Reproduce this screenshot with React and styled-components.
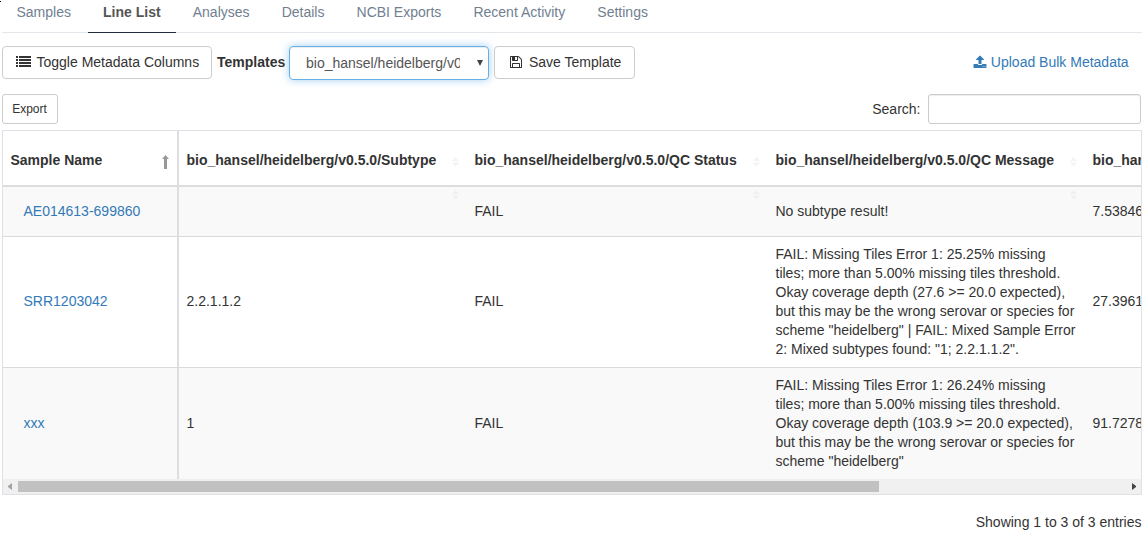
import React from "react";
import styled, { createGlobalStyle, css } from "styled-components";

const GlobalStyle = createGlobalStyle`
  *, *::before, *::after { box-sizing: border-box; }
  html, body { margin: 0; height: 536px; overflow: hidden; }
  body {
    background: #fff;
    color: #333;
    font-family: "Liberation Sans", Arial, Helvetica, sans-serif;
    font-size: 14px;
    line-height: 20px;
  }
`;

const Page = styled.main`
  width: 1142px;
  height: 536px;
  padding-left: 2px;
`;

const Speck = styled.i`
  position: absolute;
  left: 0;
  top: 1px;
  width: 1px;
  height: 1px;
  background: #000;
`;

const Tabs = styled.nav`
  display: flex;
  gap: 2.1px;
  height: 33px;
  box-shadow: inset 0 -1px 0 #e3e6ea;
`;

const Tab = styled.a`
  padding: 2px 15px 0;
  height: 33px;
  color: #708090;
  &:first-child {
    padding-left: 14.5px;
  }
  ${(p) =>
    p.$active &&
    css`
      color: #555;
      font-weight: bold;
      border-bottom: 1px solid #1f2d3d;
    `}
`;

const Toolbar = styled.div`
  display: flex;
  align-items: flex-start;
  height: 34px;
  margin-top: 13px;
`;

const Button = styled.button`
  display: flex;
  align-items: center;
  justify-content: ${(p) => (p.$small ? "center" : "flex-start")};
  width: ${(p) => p.$width}px;
  height: ${(p) => (p.$small ? 30 : 33)}px;
  padding: ${(p) => (p.$small ? "0 1px 0 0" : `0 0 1px ${p.$inset || 13}px`)};
  border: 1px solid #ccc;
  border-radius: ${(p) => (p.$small ? 3 : 4)}px;
  background: #fff;
  color: #333;
  font: inherit;
  font-size: ${(p) => (p.$small ? 12 : 14)}px;
  white-space: nowrap;
`;

const Icon = styled.svg`
  flex: none;
  width: ${(p) => p.$w || 14}px;
  height: 14px;
  margin-right: ${(p) => p.$gap}px;
  fill: currentColor;
`;

const Label = styled.label`
  margin: 6px 4px 0 5px;
  width: 68px;
  font-weight: bold;
  white-space: nowrap;
`;

const Select = styled.div`
  display: flex;
  align-items: center;
  width: 200px;
  height: 34px;
  margin-right: 5px;
  padding-left: 16px;
  border: 1px solid #66afe9;
  border-radius: 4px;
  color: #555;
  box-shadow: inset 0 1px 1px rgba(0, 0, 0, 0.075), 0 0 8px rgba(102, 175, 233, 0.6);
`;

const SelectValue = styled.span`
  width: 154px;
  overflow: hidden;
  white-space: nowrap;
`;

const Caret = styled.i`
  margin-left: 17px;
  border: solid transparent;
  border-width: 6px 3px 0;
  border-top-color: #444;
`;

const UploadLink = styled.a`
  display: flex;
  align-items: center;
  margin: 6px 13.4px 0 auto;
  color: #337ab7;
`;

const Controls = styled.div`
  display: flex;
  justify-content: space-between;
  height: 30px;
  margin: 14px 1px 6px 0;
`;

const Search = styled.label`
  display: flex;
  align-items: center;
  gap: 7.5px;
  padding-bottom: 1px;
  height: 30px;
`;

const SearchInput = styled.input`
  width: 213px;
  height: 30px;
  margin-bottom: -1px;
  border: 1px solid #ccc;
  border-radius: 3px;
  box-shadow: inset 0 1px 1px rgba(0, 0, 0, 0.075);
`;

const TableFrame = styled.section`
  height: 365px;
  border: 1px solid #dfe1e6;
  overflow: hidden;
`;

const TableView = styled.div`
  height: 348px;
  overflow: hidden;
`;

const Table = styled.table`
  width: 1381px;
  table-layout: fixed;
  border-spacing: 0;
  line-height: 19px;
`;

const edge = css`
  &:first-child {
    border-right: 2px solid #dddde2;
  }
  &:nth-child(2) {
    padding-left: 7.5px;
  }
`;

const HeadCell = styled.th`
  position: relative;
  height: 56px;
  padding: 4px 8px 0 8.5px;
  border-bottom: 2px solid #ddd;
  text-align: left;
  white-space: nowrap;
  ${edge}
  &:first-child {
    padding-left: 7.5px;
  }
`;

const Cell = styled.td`
  position: relative;
  height: ${(p) => p.$height}px;
  padding: ${(p) => (p.$raised ? "0 8px 1px 8.5px" : "0 8px 0 8.5px")};
  border-bottom: ${(p) => (p.$last ? 0 : 1)}px solid #dadadd;
  background: ${(p) => (p.$odd ? "#f9f9f9" : "#fff")};
  vertical-align: middle;
  ${edge}
  &:first-child {
    padding-left: 20.5px;
  }
`;

const SampleLink = styled.a`
  color: #337ab7;
`;

const SortMark = styled.svg`
  position: absolute;
  right: 7px;
  top: ${(p) => p.$top}px;
  width: 7px;
  height: 10px;
  fill: ${(p) => p.$fill};
`;

const SortedArrow = styled.svg`
  position: absolute;
  right: 8px;
  top: 24px;
  width: 7px;
  height: 14px;
  fill: #999;
`;

const Scrollbar = styled.div`
  display: flex;
  align-items: center;
  height: 15px;
  background: #f0f0f1;
`;

const Thumb = styled.div`
  width: 861px;
  height: 11px;
  background: #c1c1c1;
`;

const ScrollArrow = styled.i`
  width: 4px;
  height: 7px;
  margin: ${(p) => (p.$right ? "0 5px 0 auto" : "0 6px 0 5px")};
  border: solid transparent;
  border-width: ${(p) => (p.$right ? "3.5px 0 3.5px 4px" : "3.5px 4px 3.5px 0")};
  border-left-color: ${(p) => (p.$right ? "#444" : "transparent")};
  border-right-color: ${(p) => (p.$right ? "transparent" : "#a3a3a3")};
`;

const Summary = styled.p`
  margin: 17px 0.5px 0 0;
  text-align: right;
`;

const ListIcon = () => (
  <Icon $w={15} $gap={5.5} viewBox="0 0 15 14" shapeRendering="crispEdges">
    {[1, 4, 7, 10].map((y) => (
      <g key={y}>
        <rect x="0" y={y} width="2" height="2" />
        <rect x="3" y={y} width="12" height="2" />
      </g>
    ))}
  </Icon>
);

const FloppyIcon = () => (
  <Icon $gap={6} viewBox="0 0 1792 1792">
    <path d="M512 1536h768v-384h-768v384zm896 0h128v-896q0-14-10-38.500t-20-34.500l-281-281q-10-10-34-20t-39-10v416q0 40-28 68t-68 28h-576q-40 0-68-28t-28-68v-416h-128v1280h128v-416q0-40 28-68t68-28h832q40 0 68 28t28 68v416zm-384-928v-320q0-13-9.500-22.500t-22.500-9.500h-192q-13 0-22.500 9.500t-9.500 22.500v320q0 13 9.500 22.500t22.500 9.500h192q13 0 22.500-9.500t9.500-22.500zm640 32v928q0 40-28 68t-68 28h-1344q-40 0-68-28t-28-68v-1344q0-40 28-68t68-28h928q40 0 88 20t76 48l280 280q28 28 48 76t20 88z" />
  </Icon>
);

const UploadIcon = () => (
  <Icon $gap={4} viewBox="0 0 1792 1792">
    <path d="M1344 1472q0-26-19-45t-45-19-45 19-19 45 19 45 45 19 45-19 19-45zm256 0q0-26-19-45t-45-19-45 19-19 45 19 45 45 19 45-19 19-45zm128-224v320q0 40-28 68t-68 28h-1472q-40 0-68-28t-28-68v-320q0-40 28-68t68-28h427q21 56 70.500 92t110.500 36h256q61 0 110.500-36t70.500-92h427q40 0 68 28t28 68zm-325-648q-17 40-59 40h-256v448q0 26-19 45t-45 19h-256q-26 0-45-19t-19-45v-448h-256q-42 0-59-40-17-39 14-69l448-448q18-19 45-19t45 19l448 448q31 30 14 69z" />
  </Icon>
);

const Unsorted = ({ top, fill }) => (
  <SortMark $top={top} $fill={fill} viewBox="0 0 7 10">
    <path d="M3.500 0L7 4H0zM0 5.500h7L3.500 9.500z" />
  </SortMark>
);

const tabs = ["Samples", "Line List", "Analyses", "Details", "NCBI Exports", "Recent Activity", "Settings"];
const prefix = "bio_hansel/heidelberg/v0.5.0/";
const columns = ["Sample Name", prefix + "Subtype", prefix + "QC Status", prefix + "QC Message", prefix + "Coverage"];
const widths = [176, 287, 301, 317, 300];

const rows = [
  { height: 50, cells: ["AE014613-699860", "", "FAIL", ["No subtype result!"], "7.53846153846"] },
  {
    height: 131,
    cells: [
      "SRR1203042",
      "2.2.1.1.2",
      "FAIL",
      [
        "FAIL: Missing Tiles Error 1: 25.25% missing",
        "tiles; more than 5.00% missing tiles threshold.",
        "Okay coverage depth (27.6 >= 20.0 expected),",
        "but this may be the wrong serovar or species for",
        'scheme "heidelberg" | FAIL: Mixed Sample Error',
        '2: Mixed subtypes found: "1; 2.2.1.1.2".',
      ],
      "27.3961352657",
    ],
  },
  {
    height: 111,
    cells: [
      "xxx",
      "1",
      "FAIL",
      [
        "FAIL: Missing Tiles Error 1: 26.24% missing",
        "tiles; more than 5.00% missing tiles threshold.",
        "Okay coverage depth (103.9 >= 20.0 expected),",
        "but this may be the wrong serovar or species for",
        'scheme "heidelberg"',
      ],
      "91.7278911565",
    ],
  },
];

const MessageLine = styled.div`
  white-space: nowrap;
`;

function CellContent({ column, value }) {
  if (column === 0) return <SampleLink>{value}</SampleLink>;
  if (column === 3) return value.map((line) => <MessageLine key={line}>{line}</MessageLine>);
  return value;
}

export default function App() {
  return (
    <Page>
      <GlobalStyle />
      <Speck />
      <Tabs>
        {tabs.map((name) => (
          <Tab key={name} $active={name === "Line List"}>
            {name}
          </Tab>
        ))}
      </Tabs>
      <Toolbar>
        <Button $width={210}>
          <ListIcon />
          Toggle Metadata Columns
        </Button>
        <Label>Templates</Label>
        <Select>
          <SelectValue>bio_hansel/heidelberg/v0.5.0</SelectValue>
          <Caret />
        </Select>
        <Button $width={141} $inset={14}>
          <FloppyIcon />
          Save Template
        </Button>
        <UploadLink>
          <UploadIcon />
          Upload Bulk Metadata
        </UploadLink>
      </Toolbar>
      <Controls>
        <Button $small $width={56}>
          Export
        </Button>
        <Search>
          Search:
          <SearchInput />
        </Search>
      </Controls>
      <TableFrame>
        <TableView>
          <Table>
            <colgroup>
              {widths.map((w, i) => (
                <col key={i} width={w} />
              ))}
            </colgroup>
            <thead>
              <tr>
                {columns.map((name, i) => (
                  <HeadCell key={name}>
                    {name}
                    {i === 0 ? (
                      <SortedArrow viewBox="0 0 7 14">
                        <path d="M3.500 0L7 4H5V14H2V4H0z" />
                      </SortedArrow>
                    ) : (
                      <Unsorted top={26} fill="#f3f3f3" />
                    )}
                  </HeadCell>
                ))}
              </tr>
            </thead>
            <tbody>
              {rows.map((row, r) => (
                <tr key={row.cells[0]}>
                  {row.cells.map((value, c) => (
                    <Cell key={c} $height={row.height} $odd={r % 2 === 0} $last={r === 2} $raised={r === 1 && c !== 3}>
                      <CellContent column={c} value={value} />
                      {r === 0 && c > 0 && <Unsorted top={3} fill="#f0f0f0" />}
                    </Cell>
                  ))}
                </tr>
              ))}
            </tbody>
          </Table>
        </TableView>
        <Scrollbar>
          <ScrollArrow />
          <Thumb />
          <ScrollArrow $right />
        </Scrollbar>
      </TableFrame>
      <Summary>Showing 1 to 3 of 3 entries</Summary>
    </Page>
  );
}
